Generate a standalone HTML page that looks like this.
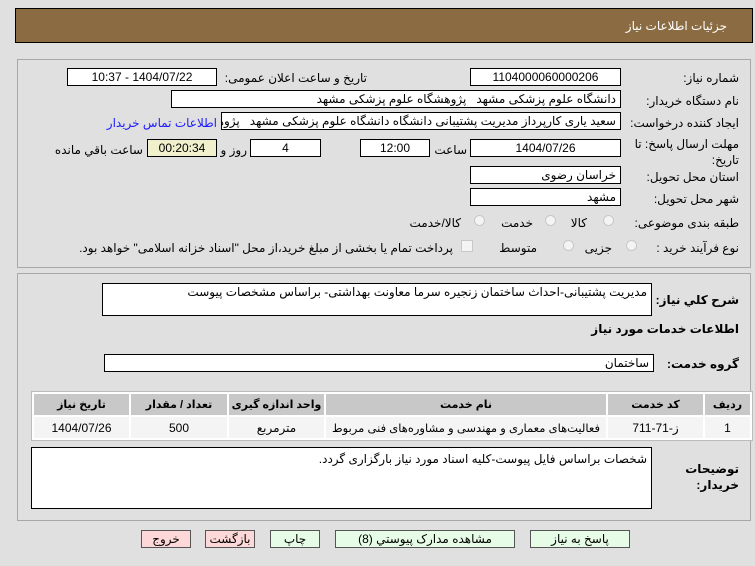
<!DOCTYPE html>
<html><head><meta charset="utf-8"><style>
body{margin:0;width:755px;height:566px;background:#e0e0e0;font-family:"Liberation Sans","DejaVu Sans",sans-serif;font-size:12px;color:#000;position:relative;overflow:hidden}
.a{position:absolute;white-space:nowrap}
.box{position:absolute;background:#fff;border:1px solid #000;box-sizing:border-box;direction:rtl;padding:0 4px;line-height:16px;white-space:nowrap;overflow:hidden}
.c{text-align:center}
.l{position:absolute;direction:rtl;white-space:nowrap;text-align:right}
.panel{position:absolute;border:1px solid #a8a8a8;box-sizing:border-box}
.rad{position:absolute;width:11px;height:11px;border-radius:50%;border:1px solid #c8c8c8;background:#f4f4f4;box-sizing:border-box}
table{position:absolute;border-collapse:separate;border-spacing:2px;background:#fff;border:1px solid #bbb}
td,th{text-align:center;direction:rtl;height:21px;padding:0;font-size:12px;white-space:nowrap}
th{background:#c8c8c8;font-weight:bold;font-size:11px}
td{background:#f4f4f4}
.btn{position:absolute;height:18px;border:1px solid #555;box-sizing:border-box;text-align:center;line-height:16px;font-size:12px;direction:rtl}
</style></head><body>
<div class="a" style="left:15px;top:8px;width:738px;height:35px;background:#8b6c42;border:1px solid #000;box-sizing:border-box"></div>
<div class="l" style="right:28px;top:19px;color:#fff">جزئیات اطلاعات نیاز</div>

<div class="panel" style="left:17px;top:59px;width:734px;height:209px"></div>
<div class="panel" style="left:17px;top:273px;width:734px;height:248px"></div>

<div class="l" style="right:16px;top:71px">شماره نیاز:</div>
<div class="box c" style="left:470px;top:68px;width:151px;height:18px">1104000060000206</div>
<div class="l" style="right:388px;top:71px">تاریخ و ساعت اعلان عمومی:</div>
<div class="box c" style="left:67px;top:68px;width:150px;height:18px">1404/07/22 - 10:37</div>

<div class="l" style="right:16px;top:94px">نام دستگاه خریدار:</div>
<div class="box" style="left:171px;top:90px;width:450px;height:18px">دانشگاه علوم پزشکی مشهد &nbsp; پژوهشگاه علوم پزشکی مشهد</div>

<div class="l" style="right:16px;top:116px">ایجاد کننده درخواست:</div>
<div class="box" style="left:221px;top:112px;width:400px;height:18px">سعید یاری کارپرداز مدیریت پشتیبانی دانشگاه دانشگاه علوم پزشکی مشهد &nbsp; پژوهشگاه</div>
<div class="l" style="right:538px;top:116px;color:#1a1aff">اطلاعات تماس خریدار</div>

<div class="l" style="right:16px;top:137px">مهلت ارسال پاسخ: تا</div>
<div class="l" style="right:16px;top:153px">تاریخ:</div>
<div class="box c" style="left:470px;top:139px;width:151px;height:18px">1404/07/26</div>
<div class="l" style="right:288px;top:143px">ساعت</div>
<div class="box c" style="left:360px;top:139px;width:70px;height:18px">12:00</div>
<div class="box c" style="left:250px;top:139px;width:71px;height:18px">4</div>
<div class="l" style="right:508px;top:143px">روز و</div>
<div class="box c" style="left:147px;top:139px;width:70px;height:18px;background:#f0f0cc">00:20:34</div>
<div class="l" style="right:612px;top:143px">ساعت باقي مانده</div>

<div class="l" style="right:16px;top:170px">استان محل تحویل:</div>
<div class="box" style="left:470px;top:166px;width:151px;height:18px">خراسان رضوی</div>
<div class="l" style="right:16px;top:192px">شهر محل تحویل:</div>
<div class="box" style="left:470px;top:188px;width:151px;height:18px">مشهد</div>

<div class="l" style="right:16px;top:216px">طبقه بندی موضوعی:</div>
<div class="rad" style="left:603px;top:215px"></div><div class="l" style="right:168px;top:216px">کالا</div>
<div class="rad" style="left:545px;top:215px"></div><div class="l" style="right:222px;top:216px">خدمت</div>
<div class="rad" style="left:474px;top:215px"></div><div class="l" style="right:294px;top:216px">کالا/خدمت</div>

<div class="l" style="right:16px;top:241px">نوع فرآیند خرید :</div>
<div class="rad" style="left:626px;top:240px"></div><div class="l" style="right:143px;top:241px">جزیی</div>
<div class="rad" style="left:563px;top:240px"></div><div class="l" style="right:218px;top:241px">متوسط</div>
<div class="a" style="left:461px;top:240px;width:12px;height:12px;border:1px solid #c8c8c8;background:#f4f4f4;box-sizing:border-box"></div>
<div class="l" style="right:302px;top:241px">پرداخت تمام یا بخشی از مبلغ خرید،از محل "اسناد خزانه اسلامی" خواهد بود.</div>

<div class="l" style="right:16px;top:293px;font-weight:bold">شرح کلي نیاز:</div>
<div class="box" style="left:102px;top:283px;width:550px;height:33px">مدیریت پشتیبانی-احداث ساختمان زنجیره سرما معاونت بهداشتی- براساس مشخصات پیوست</div>
<div class="l" style="right:16px;top:322px;font-weight:bold">اطلاعات خدمات مورد نیاز</div>
<div class="l" style="right:16px;top:357px;font-weight:bold">گروه خدمت:</div>
<div class="box" style="left:104px;top:354px;width:550px;height:18px">ساختمان</div>

<table style="left:31px;top:391px;width:722px">
<tr><th style="width:95px">تاریخ نیاز</th><th style="width:96px">تعداد / مقدار</th><th style="width:95px">واحد اندازه گیری</th><th style="width:280px">نام خدمت</th><th style="width:95px">کد خدمت</th><th>ردیف</th></tr>
<tr><td>1404/07/26</td><td>500</td><td>مترمربع</td><td style="font-size:11.5px">فعالیت‌های معماری و مهندسی و مشاوره‌های فنی مربوط</td><td>ز-71-711</td><td>1</td></tr>
</table>

<div class="l" style="right:16px;top:462px;font-weight:bold">توضیحات</div>
<div class="l" style="right:16px;top:478px;font-weight:bold">خریدار:</div>
<div class="box" style="left:31px;top:447px;width:621px;height:62px;line-height:22px">شخصات براساس فایل پیوست-کلیه اسناد مورد نیاز بارگزاری گردد.</div>

<div class="btn" style="left:141px;top:530px;width:50px;background:#fcd8d8">خروج</div>
<div class="btn" style="left:205px;top:530px;width:50px;background:#fcd8d8">بازگشت</div>
<div class="btn" style="left:270px;top:530px;width:50px;background:#e6fce6">چاپ</div>
<div class="btn" style="left:335px;top:530px;width:180px;background:#e6fce6">مشاهده مدارک پیوستي (8)</div>
<div class="btn" style="left:530px;top:530px;width:100px;background:#e6fce6">پاسخ به نیاز</div>
</body></html>
